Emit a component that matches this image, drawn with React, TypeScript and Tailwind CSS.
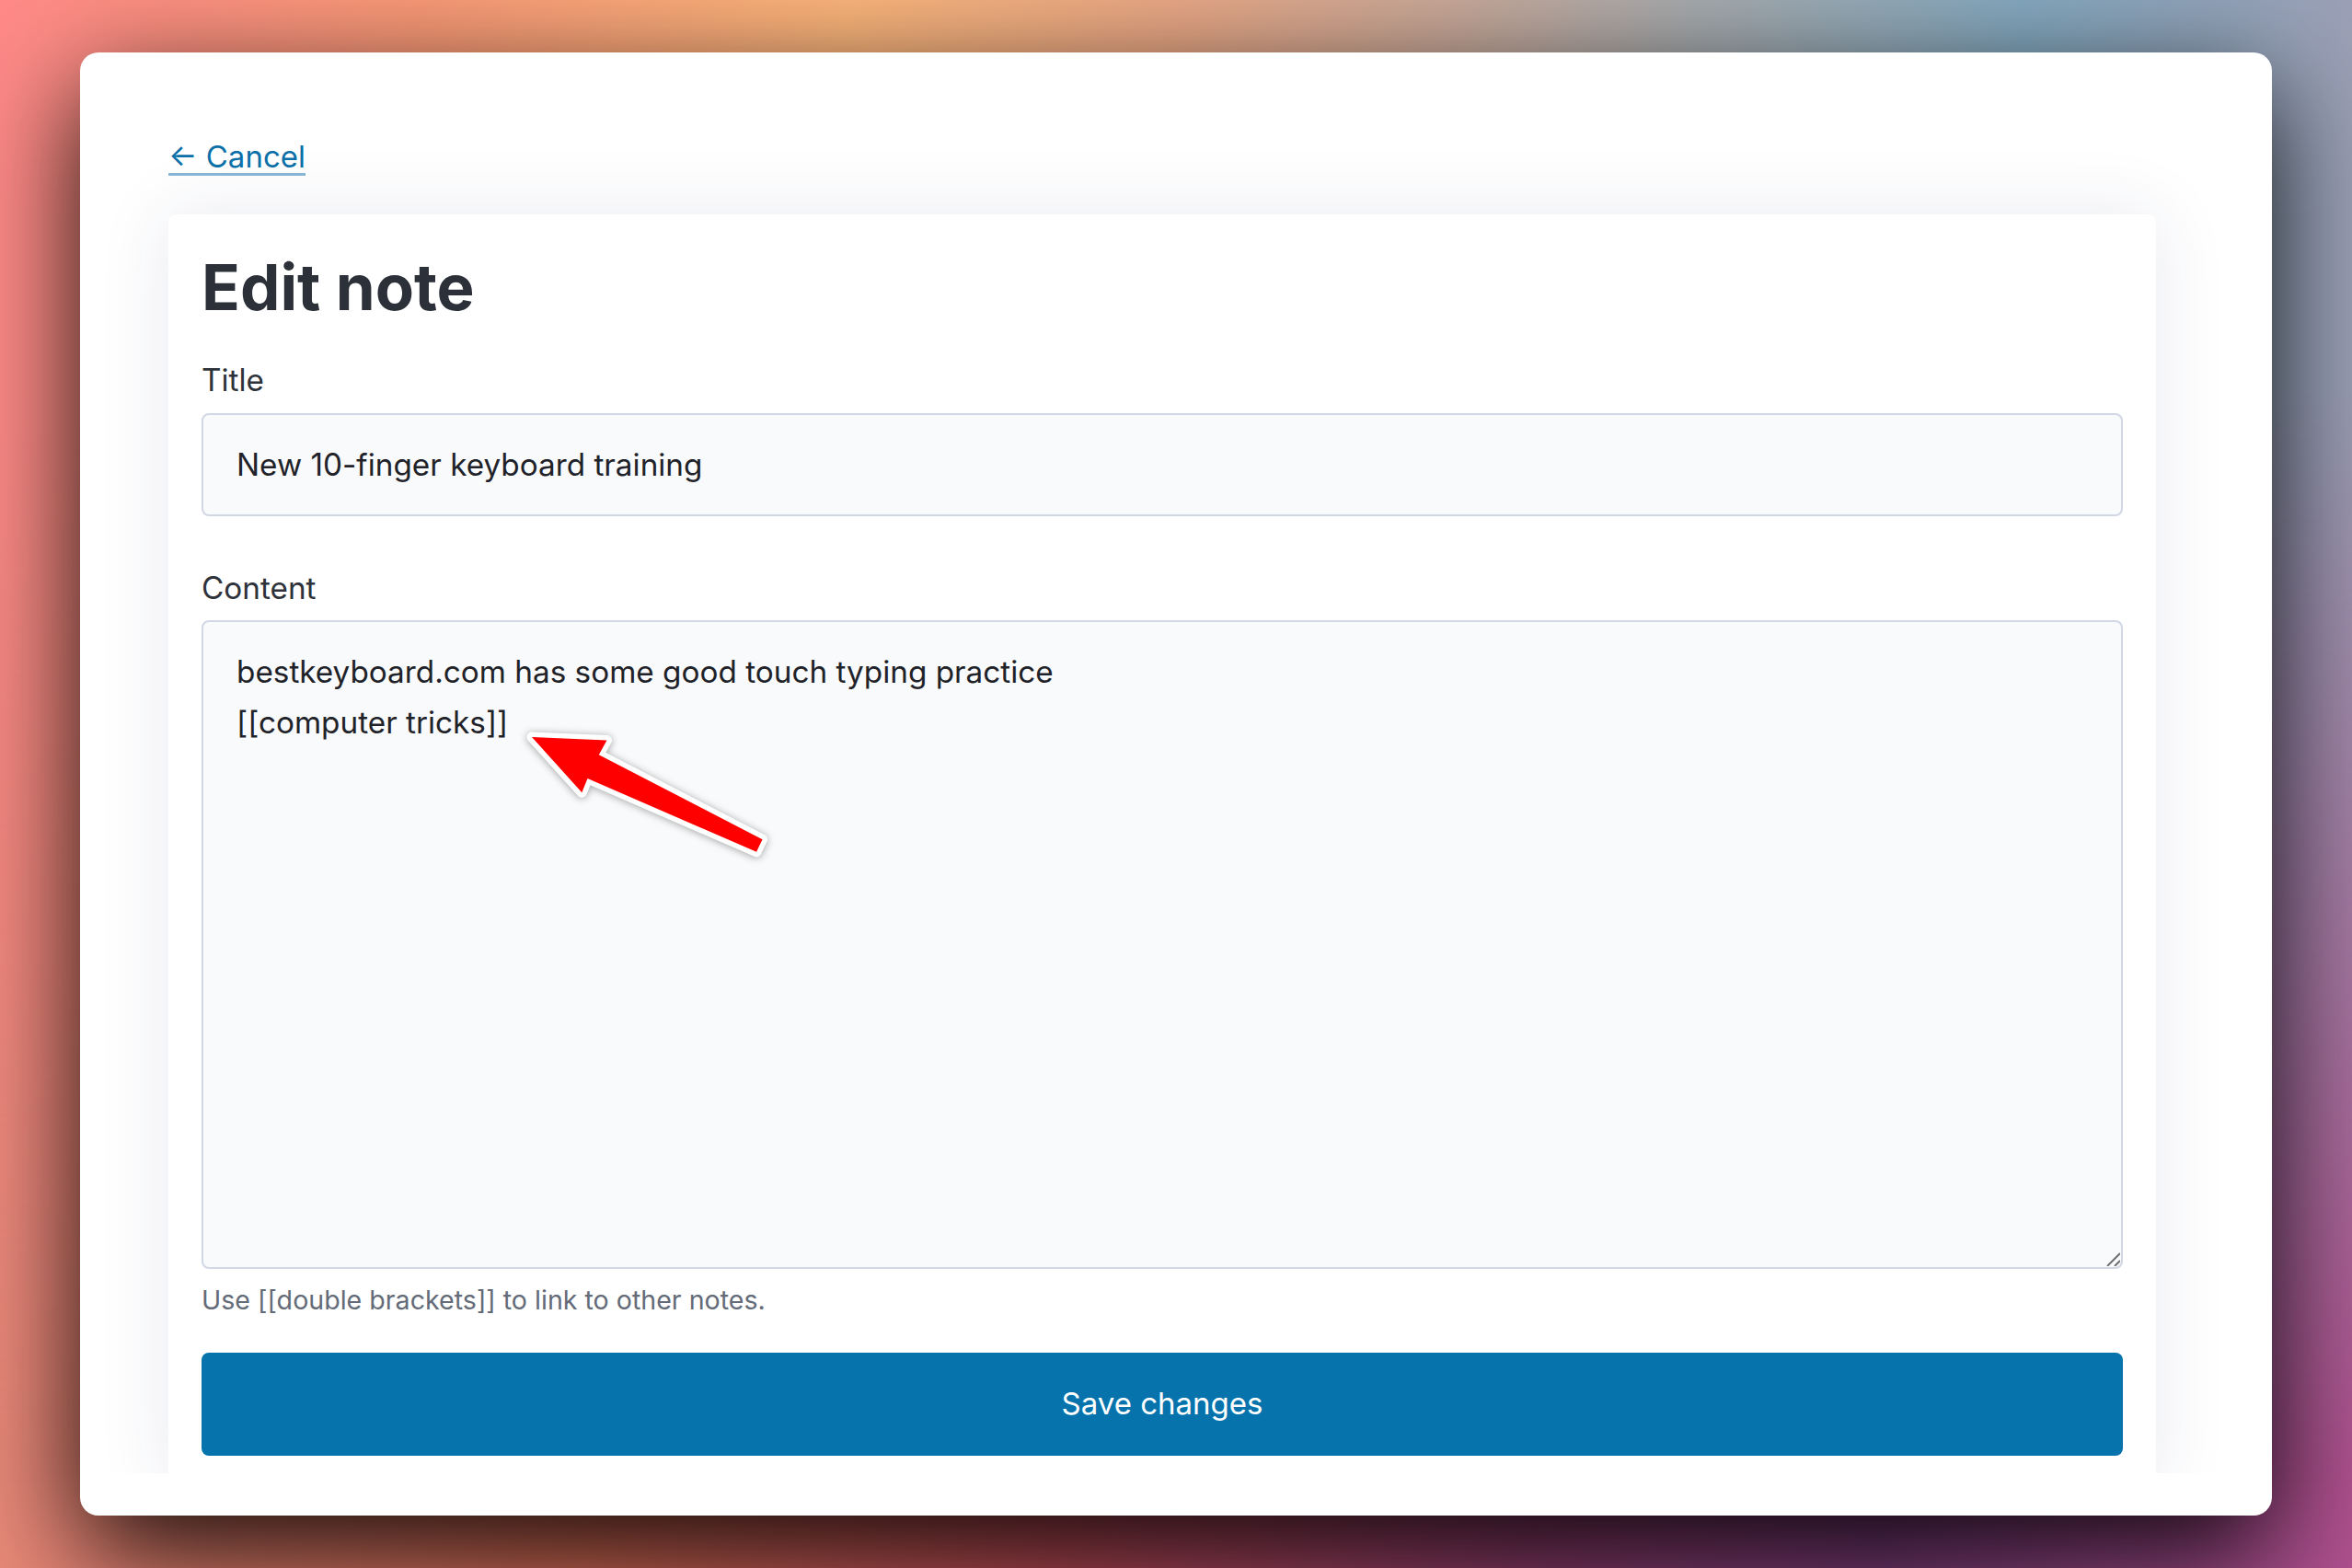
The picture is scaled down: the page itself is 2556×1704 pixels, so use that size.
import { useState } from 'react';

// Red call-out arrow with a white outline, tip at (40, 40), pointing up-left
const CalloutArrow = () => (
  <svg
    width="340"
    height="200"
    viewBox="0 0 340 200"
    className="drop-shadow-[0_1px_4px_rgba(0,0,0,0.35)]"
  >
    <g transform="translate(40 40) rotate(25.5)">
      <polygon
        points="0,0 75,-32 74,-14 274,-7.5 274,7.5 74,14.5 75,31"
        fill="#fe0000"
        stroke="#ffffff"
        strokeWidth="11"
        strokeLinejoin="round"
        paintOrder="stroke"
      />
    </g>
  </svg>
);

const ResizeGrip = () => (
  <svg width="16" height="16" viewBox="0 0 16 16">
    <path d="M2 16 L16 2 M10 16 L16 10" stroke="#6f6f6f" strokeWidth="2" />
  </svg>
);

const EditNote = () => {
  const [title, setTitle] = useState('New 10-finger keyboard training');
  const [content, setContent] = useState(
    'bestkeyboard.com has some good touch typing practice\n[[computer tricks]]'
  );

  return (
    <div className="h-[1544px] overflow-hidden pl-[96px] pr-[126px] pt-[87px]">
      <div className="mb-[37px] text-[33px] leading-[52px]">
        <a
          href="#"
          className="text-[#0b6fa8] underline decoration-[#86b5d6] decoration-[3px] underline-offset-[6px]"
        >
          ← Cancel
        </a>
      </div>

      <div className="rounded-[8px] bg-white px-[36px] pb-[36px] pt-[38px] shadow-[0_0_80px_rgba(40,50,110,0.1)]">
        <h1 className="mb-[36px] text-[69px] font-bold leading-[82px] text-[#2c3039]">Edit note</h1>

        <label className="mb-[12px] block text-[33.3px] leading-[48px] text-[#2e323a]">Title</label>
        <input
          value={title}
          onChange={(e) => setTitle(e.target.value)}
          className="block h-[112px] w-full rounded-[8px] border-2 border-[#d1d7e4] bg-[#f9fafb] px-[36px] text-[33.3px] text-[#1f2329] outline-none"
        />

        <label className="mb-[11px] mt-[54px] block text-[33.3px] leading-[48px] text-[#2e323a]">
          Content
        </label>
        <div className="relative">
          <textarea
            value={content}
            onChange={(e) => setContent(e.target.value)}
            className="block h-[705px] w-full resize-none rounded-[8px] border-2 border-[#d1d7e4] bg-[#f9fafb] px-[36px] pt-[27px] text-[33.3px] leading-[55px] text-[#1f2329] outline-none"
          />
          <div className="pointer-events-none absolute bottom-[3px] right-[3px]">
            <ResizeGrip />
          </div>
          <div className="pointer-events-none absolute left-[319px] top-[87px]">
            <CalloutArrow />
          </div>
        </div>
        <p className="mt-[13px] text-[28.6px] leading-[42px] text-[#646b78]">
          Use [[double brackets]] to link to other notes.
        </p>

        <button className="mt-[36px] block h-[112px] w-full rounded-[8px] bg-[#0673ad] text-[33px] text-white">
          Save changes
        </button>
      </div>
    </div>
  );
};

export default function App() {
  return (
    <div className="relative flex h-[1704px] w-full items-center justify-center overflow-hidden bg-[linear-gradient(90deg,#ea8a7a_0%,#d46a55_25%,#b84a55_45%,#8e3c6c_65%,#7c3c7a_80%,#b0518f_100%)] font-[Inter,'Noto_Sans',sans-serif]">
      {/* warm-to-cool wash across the top of the wallpaper */}
      <div className="absolute inset-0 bg-[linear-gradient(90deg,#ff8a88_0%,#fa9a77_18%,#fbb57b_36%,#e9a886_50%,#c8a99a_62%,#a7abae_72%,#85a9c0_86%,#9ba0b6_100%)] [mask-image:linear-gradient(to_bottom,black_0%,black_25%,transparent_95%)]" />

      <div className="relative h-[1590px] w-[2382px] overflow-hidden rounded-[20px] bg-white shadow-[0_40px_120px_rgba(0,0,0,0.9)]">
        <EditNote />
      </div>
    </div>
  );
}
